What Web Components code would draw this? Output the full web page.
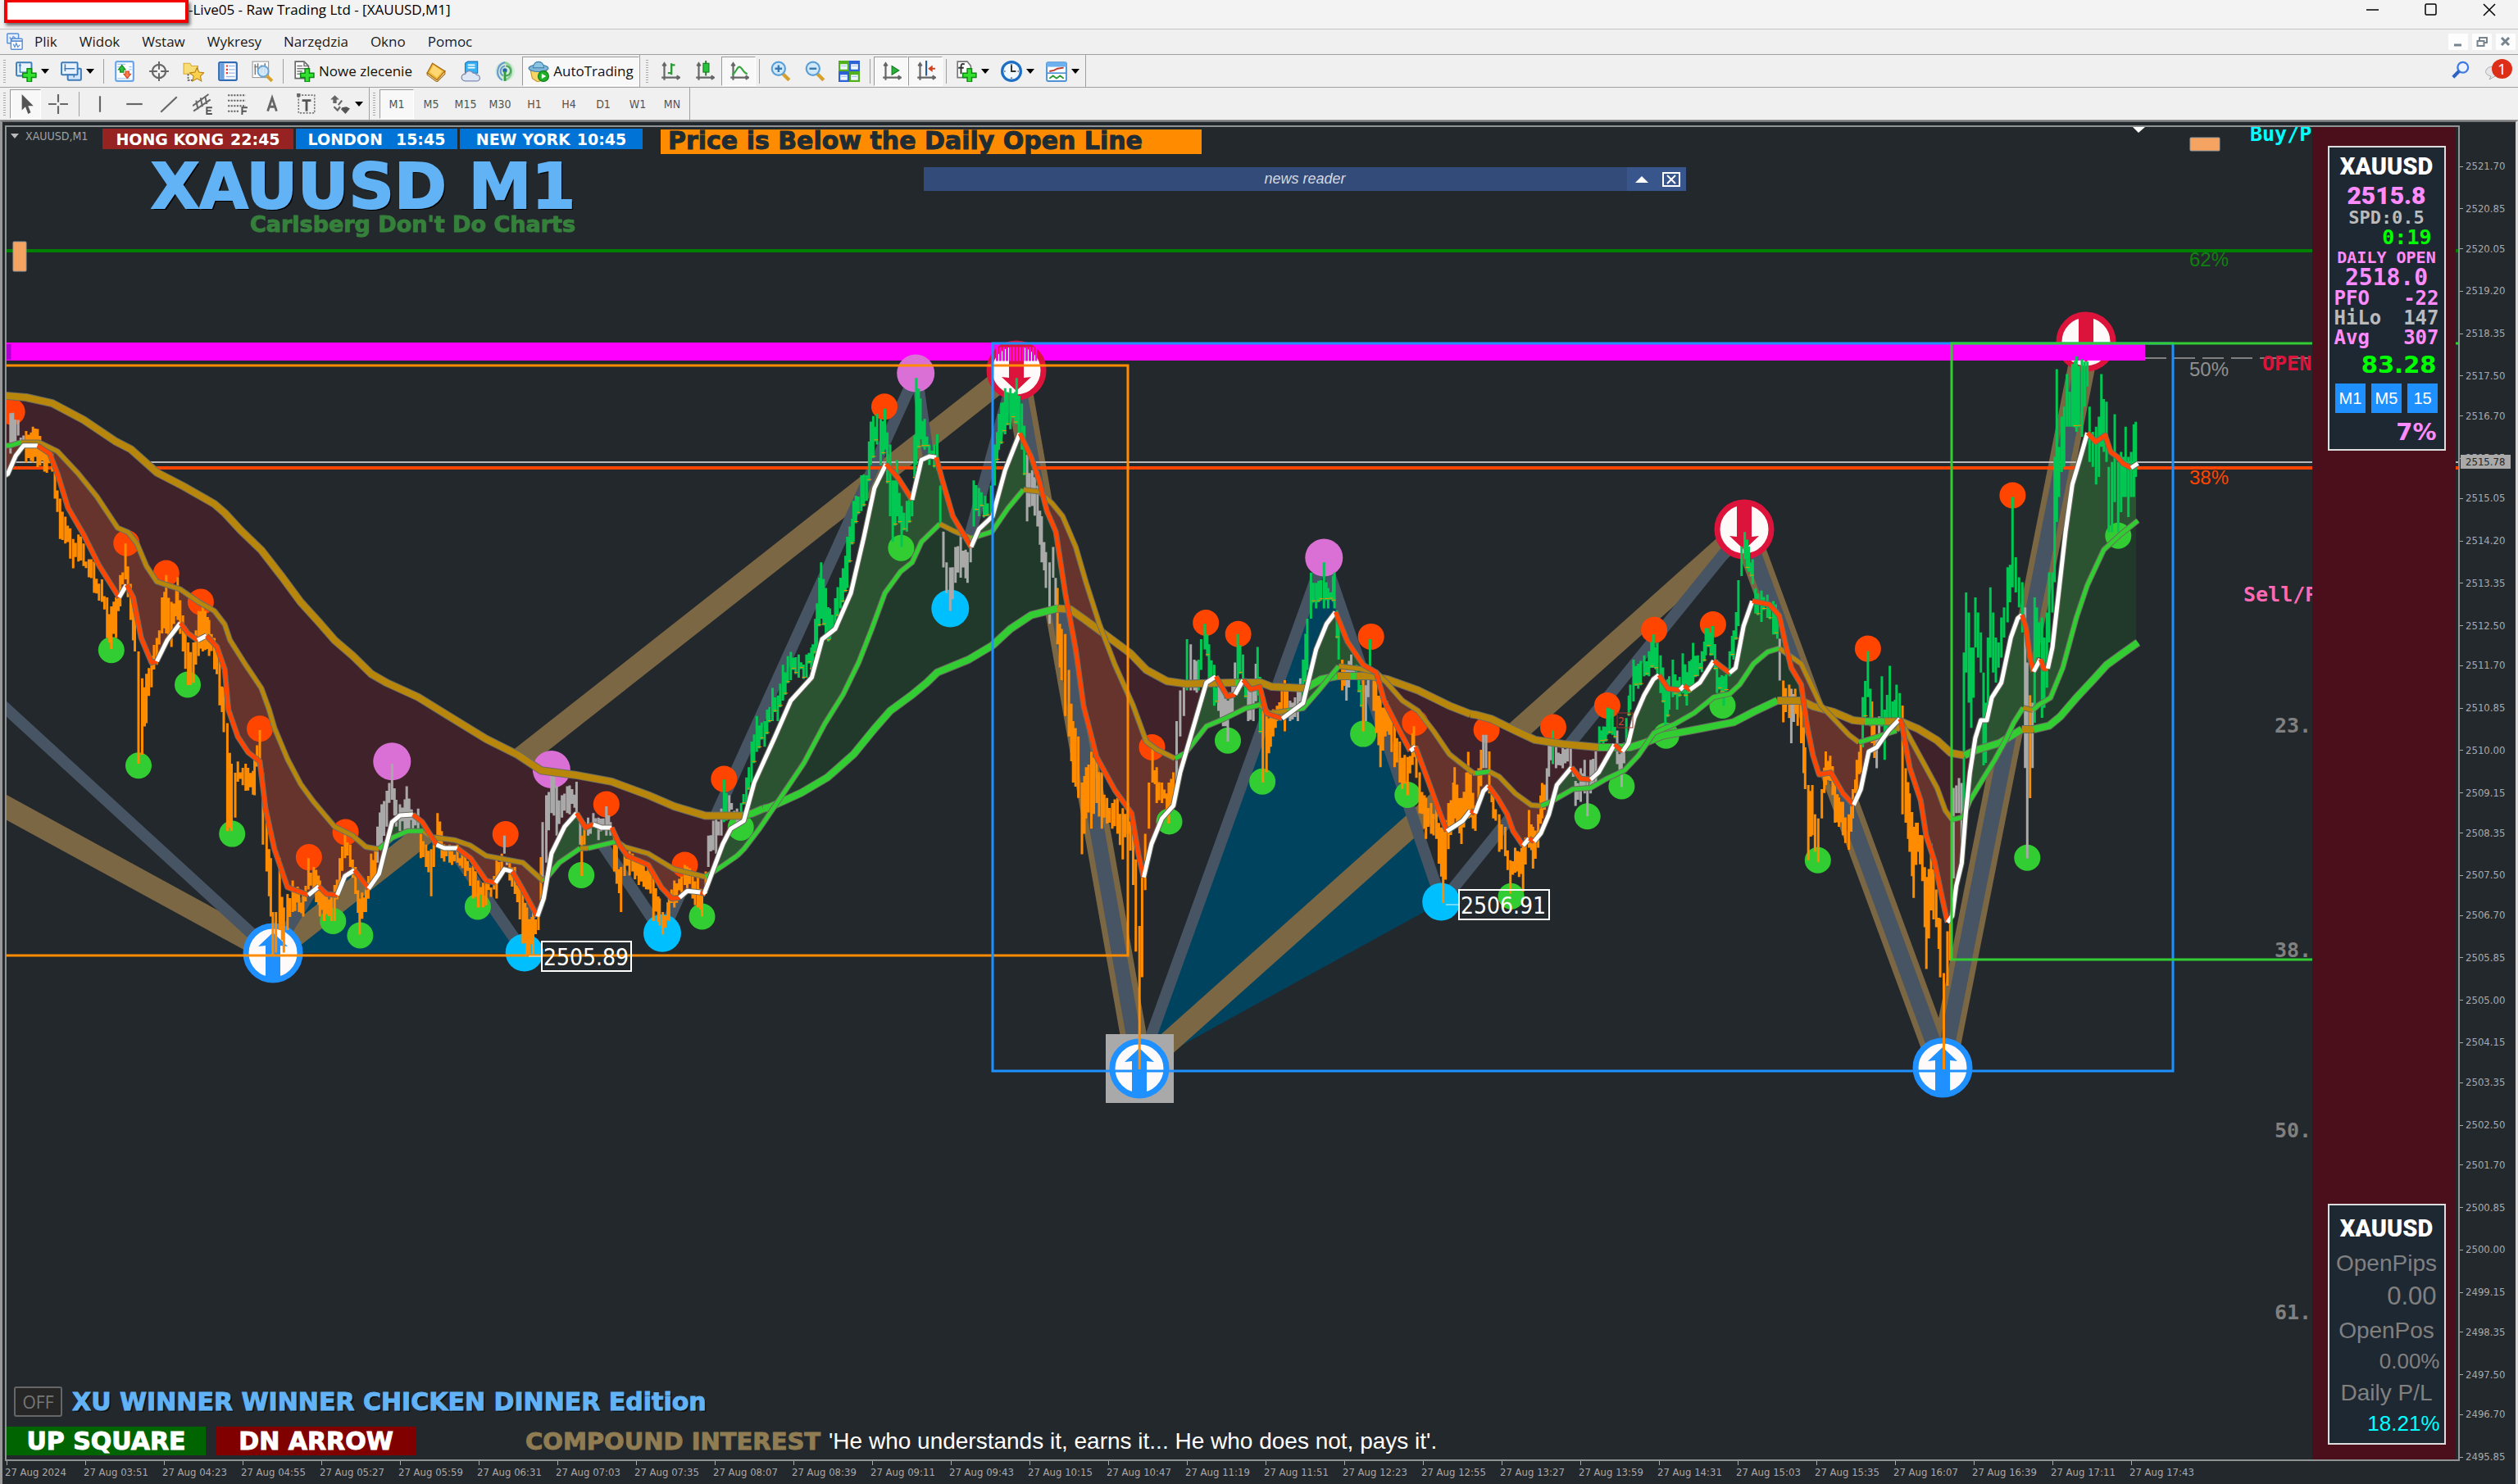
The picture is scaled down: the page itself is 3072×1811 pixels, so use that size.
<!DOCTYPE html>
<html lang="pl">
<head>
<meta charset="utf-8">
<title>Raw Trading Ltd - [XAUUSD,M1]</title>
<style>
  html, body { margin: 0; height: 100%; background: #f0f0f0; }
  body { font-family: "Open Sans", "Noto Sans", sans-serif; }
</style>
</head>
<body>
<trade-terminal></trade-terminal>

<script>
const HEAVY = '"DejaVu Sans", "Liberation Sans", sans-serif';
const UI = '"DejaVu Sans Condensed", "DejaVu Sans", sans-serif';

function define(name, css, html, setup) {
  customElements.define(name, class extends HTMLElement {
    connectedCallback() {
      if (this.shadowRoot) return;
      const root = this.attachShadow({ mode: 'open' });
      root.innerHTML = `<style>*{box-sizing:border-box}${css}</style>` +
        (typeof html === 'function' ? html(this) : html);
      if (setup) setup(this, root);
    }
  });
}

/* ---------- icons ---------- */
const plus = '<path d="M13 9h5v5h5v5h-5v5h-5v-5h-5v-5h5z" fill="#33e02e" stroke="#0b8a12" stroke-width="1.4"/>';
const axes = '<path d="M6 3v19M3 19h20M4 6l2-3 2 3M20 17l3 2-3 2" fill="none" stroke="#666" stroke-width="2"/>';
const ICONS = {
  app: '<rect x="2" y="1" width="15" height="13" rx="1" fill="#e4efff" stroke="#5a8fd6" stroke-width="1.6"/><rect x="7" y="8" width="15" height="14" rx="1" fill="#fff" stroke="#5a8fd6" stroke-width="1.6"/><path d="M7 11h15" stroke="#5a8fd6" stroke-width="2"/><path d="M10 15l2 4 2-5 2 5 3-3M5 6l3 3 2-4 3 2" fill="none" stroke="#5a8fd6" stroke-width="1.4"/>',
  newchart: '<rect x="1" y="2" width="17" height="15" rx="1" fill="#e8f3ff" stroke="#3f7cb8" stroke-width="1.8"/><path d="M5 4v9h10M4 6l1-2 1 2" fill="none" stroke="#3f7cb8" stroke-width="1.3"/>' + plus,
  profiles: '<rect x="8" y="9" width="15" height="13" rx="1" fill="#cfe4fa" stroke="#3f7cb8" stroke-width="1.8"/><rect x="1" y="2" width="18" height="14" rx="1" fill="#e8f3ff" stroke="#3f7cb8" stroke-width="1.8"/><path d="M5 4v8M4 9h12M5 16h10v3" fill="none" stroke="#3f7cb8" stroke-width="1.4"/>',
  market: '<rect x="2" y="1" width="20" height="22" rx="2" fill="#fff" stroke="#6aa5e8" stroke-width="2"/><path d="M4 4h9M4 7h4M4 20h14M17 7h3M17 10h3" stroke="#9cc3f2" stroke-width="1"/><path d="M9 5l4 5h-2v3H7v-3H5z" fill="#2fbf3a" stroke="#128a1c"/><path d="M15 20l-4-5h2v-3h4v3h2z" fill="#ff7a4a" stroke="#d4441c"/>',
  cross: '<circle cx="12" cy="12" r="7.5" fill="none" stroke="#666" stroke-width="2"/><path d="M12 1v9M12 14v9M1 12h9M14 12h9" stroke="#666" stroke-width="1.8"/>',
  star: '<path d="M1 3h7l2 3h7v9H1z" fill="#f7dd76" stroke="#d9a934"/><path d="M6 15v7h5" fill="none" stroke="#555" stroke-dasharray="2 1.4" stroke-width="1.5"/><path d="M16 8l2.300 5 5.700.7-4.200 3.800 1.200 5.500-5-2.800-5 2.800 1.200-5.500L8 13.700l5.700-.7z" fill="#fbd04c" stroke="#b98314"/>',
  navigator: '<rect x="2" y="2" width="20" height="20" rx="1.500" fill="#fff" stroke="#2f6cb4" stroke-width="2"/><path d="M3 3h5v18H3z" fill="#6b9fde"/><path d="M10 6h2M10 10h2M10 14h2" stroke="#e33" stroke-width="2"/><path d="M13 6h7M13 10h7M13 14h7M10 18h10" stroke="#9ab8e8" stroke-width="1.2"/>',
  tester: '<rect x="1" y="1" width="18" height="18" fill="#fff" stroke="#999"/><path d="M4 4v12M7 3v9M11 5v9M15 3v12M3 7h3M10 9h3" stroke="#777" stroke-width="1.4"/><circle cx="13" cy="12" r="6" fill="#cfe8fb" fill-opacity=".9" stroke="#68a4d6" stroke-width="1.800"/><path d="M17 17l6 6" stroke="#d5a12c" stroke-width="3.500"/>',
  order: '<path d="M2 1h10l5 5v14H2z" fill="#fff" stroke="#666" stroke-width="1.500"/><path d="M12 1v5h5M4 6h6M4 9h10M4 12h6M4 15h6" fill="none" stroke="#777" stroke-width="1.400"/>' + plus,
  book: '<path d="M8 3l14 9-9 10-11-8z" fill="#f0b93a" stroke="#a86d10" stroke-width="1.200"/><path d="M2 14l11 8 9-10v3l-9 9-11-8z" fill="#fff3cd" stroke="#a86d10"/><path d="M9 5l10 7-6 7-8-6z" fill="#ffd873"/>',
  cloud: '<path d="M6 3l3-2h11v13H6z" fill="#36b2f4" stroke="#1c74c4"/><path d="M9 5h8M9 8h8" stroke="#fff" stroke-width="1.700"/><path d="M6 23a4 4 0 0 1 0-8 5 5 0 0 1 9-1 4 4 0 0 1 4 2 3.500 3.500 0 0 1 0 7z" fill="#dfe6f4" stroke="#7d8cb4" stroke-width="1.200"/>',
  signal: '<circle cx="12" cy="12" r="11" fill="#d3ecd6"/><path d="M12 22A10.500 10.500 0 0 0 12 2" fill="none" stroke="#8fcf9a" stroke-width="2.500"/><path d="M9 22A11 11 0 0 1 12 2M10 17a6 6 0 0 1 2-11" fill="none" stroke="#6a9bd0" stroke-width="2"/><path d="M13 17a5.500 5.500 0 0 0 0-11" fill="none" stroke="#4aa45a" stroke-width="2"/><circle cx="12" cy="11" r="2.500" fill="#2166ac"/><path d="M12 12v11" stroke="#2fa13a" stroke-width="2.600"/>',
  auto: '<path d="M3 11h18l-3 10-7 3-6-4z" fill="#f6d563" stroke="#c1962a"/><ellipse cx="12" cy="8.500" rx="11" ry="4" fill="#7fb6d8" stroke="#3d7ea8"/><path d="M6 8c0-9 12-9 12 0z" fill="#8cc5e4" stroke="#3d7ea8"/><circle cx="17.500" cy="17.500" r="6" fill="#1fae2a" stroke="#0b7a16"/><path d="M15.500 14.500l5 3-5 3z" fill="#fff"/>',
  bars: axes + '<path d="M14 3v13M14 5h4M10 14h4" stroke="#2c9a34" stroke-width="2.200" fill="none"/>',
  candles: axes + '<path d="M14 0v17" stroke="#2c7a34" stroke-width="1.800"/><rect x="11" y="3" width="6.500" height="10" fill="#27c33a" stroke="#147a20"/>',
  line: axes + '<path d="M5 16c5-3 5-9 8-9s4 7 9 8" fill="none" stroke="#38a642" stroke-width="2"/>',
  zoomin: '<path d="M15 15l7 7" stroke="#d5a12c" stroke-width="4"/><circle cx="10" cy="9" r="7.500" fill="#cfe9fb" stroke="#5b9fd8" stroke-width="2"/><path d="M10 5v8M6 9h8" stroke="#3878b0" stroke-width="2.200"/>',
  zoomout: '<path d="M15 15l7 7" stroke="#d5a12c" stroke-width="4"/><circle cx="10" cy="9" r="7.500" fill="#cfe9fb" stroke="#5b9fd8" stroke-width="2"/><path d="M6 9h8" stroke="#3878b0" stroke-width="2.200"/>',
  tile: '<path d="M0 0h12v12H0zM12 12h12v12H12z" fill="#52b01c"/><path d="M12 0h12v12H12zM0 12h12v12H0z" fill="#2d62d6"/><path d="M2 4h8v6H2zM14 4h8v6h-8zM2 16h8v6H2zM14 16h8v6h-8z" fill="#eef6ff"/><path d="M3 6h6M15 6h6M3 18h6M15 18h6" stroke="#a9c3e8"/>',
  scroll: axes + '<path d="M13 6l8 5-8 5z" fill="#27b33a" stroke="#147a20"/>',
  shift: axes + '<path d="M13 0v17" stroke="#2b5f96" stroke-width="2"/><path d="M15 9l5-4v3h3v2h-3v3z" fill="#d1401c"/>',
  fx: '<path d="M2 1h11l4 5v13H2z" fill="#fff" stroke="#777" stroke-width="1.500"/><path d="M10 4c-3-1-4 0-4 3v8M3 8h6" fill="none" stroke="#333" stroke-width="1.800"/>' + plus,
  clock: '<circle cx="12" cy="12" r="10.500" fill="#f2f8ff" stroke="#1c6fc4" stroke-width="3"/><path d="M12 5v7h5" fill="none" stroke="#333" stroke-width="1.800"/><path d="M12 4v1M12 19v1M4 12h1M19 12h1" stroke="#555" stroke-width="2"/>',
  template: '<rect x="1" y="2" width="22" height="21" rx="1.500" fill="#fff" stroke="#4f93d6" stroke-width="1.800"/><path d="M1 2h22v5H1z" fill="#6db0ee"/><path d="M1 14h22" stroke="#4f93d6" stroke-width="1.500"/><path d="M4 12l5-1 4-2 7-1" fill="none" stroke="#c0392b" stroke-width="1.700"/><path d="M4 20l4-3 4 3 4-3 4 3" fill="none" stroke="#2c9a34" stroke-width="1.700"/>',
  cursor: '<path d="M8 1v18l4-4 3 8 3-1.500-3-7.500h6z" fill="#555"/>',
  plusline: '<path d="M12 1v9M12 14v9M1 12h9M14 12h9" stroke="#666" stroke-width="2"/>',
  vline: '<path d="M12 3v18" stroke="#666" stroke-width="2"/>',
  hline: '<path d="M3 12h18" stroke="#666" stroke-width="2"/>',
  diag: '<path d="M3 21L21 4" stroke="#666" stroke-width="2"/>',
  channel: '<path d="M0 14L18 1M1 20L20 7M4 8l2 10M9 5l2 10M14 3l2 9" stroke="#666" stroke-width="1.800"/><path d="M16 16h6M16 19.500h5M16 23h6M16 15v9" stroke="#555" stroke-width="1.800"/>',
  fibo: '<path d="M1 2h20M1 8h20M1 14h20M1 20h13" stroke="#666" stroke-width="1.800" stroke-dasharray="2 1.300"/><path d="M17 24v-8h6M17 20h5" fill="none" stroke="#555" stroke-width="1.800"/>',
  text: '<path d="M7 20L12 5l5 15M9 15h6" fill="none" stroke="#666" stroke-width="2.600"/>',
  label: '<rect x="3" y="2" width="18" height="20" fill="none" stroke="#777" stroke-width="1.500" stroke-dasharray="2 1.500"/><path d="M7 8h10M12 8v12" stroke="#555" stroke-width="2.600"/><path d="M1 0h4v4H1z" fill="#666"/>',
  shapes: '<path d="M1 7l5-5 5 5-3 0v4H4V7z" fill="#666"/><path d="M14 16l5-1 4 2-5 6-5-5z" fill="#555"/><path d="M5 15l4 4 3-4M10 13l4-5" fill="none" stroke="#666" stroke-width="2"/>',
  search: '<circle cx="15" cy="9" r="7" fill="#edf4ff" stroke="#3f7be0" stroke-width="2.500"/><path d="M10 14l-8 8" stroke="#2e62c4" stroke-width="4.500"/>'
};
const icon = (n, s = 26) => `<svg width="${s}" height="${s}" viewBox="0 0 24 24" aria-hidden="true">${ICONS[n]}</svg>`;

/* ---------- window chrome ---------- */
define('title-bar', `
  :host{display:flex;height:36px;background:#f3f3f3;border-bottom:1px solid #c4c4c4;font-size:17px;color:#000;align-items:flex-start}
  .field{flex:none;margin-left:5px;width:225px;height:28px;background:#fff;border:4px solid #f20000;border-top-width:3px;box-shadow:2px 3px 4px #666}
  h1{flex:1;font:inherit;margin:0;line-height:24px}
  button{width:71px;height:24px;padding:0;border:0;background:none;display:grid;place-items:center}
`, `<div class="field"></div><h1>-Live05 - Raw Trading Ltd - [XAUUSD,M1]</h1>
  <button aria-label="Minimalizuj"><svg width="16" height="16"><path d="M0 8h15" stroke="#000" stroke-width="1.500"/></svg></button>
  <button aria-label="Maksymalizuj"><svg width="16" height="16"><rect x="1" y="1" width="13" height="13" rx="1.500" fill="none" stroke="#000" stroke-width="1.500"/></svg></button>
  <button aria-label="Zamknij"><svg width="16" height="16"><path d="M1 1l14 14M15 1L1 15" stroke="#000" stroke-width="1.500"/></svg></button>`);

define('menu-bar', `
  :host{display:flex;height:31px;background:#f0f0f0;border-bottom:1px solid #a0a0a0;align-items:center;padding:0 3px 0 7px;font:17px "Open Sans",sans-serif}
  nav{display:flex;flex:1;gap:27px;margin-left:13px}
  a{color:#1a1a1a;text-decoration:none;line-height:26px}
  .mdi{display:flex;gap:5px}
  button{width:24px;height:20px;border:0;padding:0;background:#fdfdfd;display:grid;place-items:center}
`, `${icon('app', 22)}
  <nav>${['Plik', 'Widok', 'Wstaw', 'Wykresy', 'Narzędzia', 'Okno', 'Pomoc'].map(t => `<a href="#">${t}</a>`).join('')}</nav>
  <div class="mdi">
    <button aria-label="Minimalizuj wykres"><svg width="14" height="14"><path d="M2 11h9" stroke="#76848f" stroke-width="3"/></svg></button>
    <button aria-label="Przywróć wykres"><svg width="14" height="14"><path d="M4 5V2h9v6h-3M4 2h9" fill="none" stroke="#76848f" stroke-width="2"/><rect x="1.500" y="6" width="8" height="6" fill="none" stroke="#76848f" stroke-width="2"/></svg></button>
    <button aria-label="Zamknij wykres"><svg width="14" height="14"><path d="M2 2l9 9M11 2l-9 9" stroke="#76848f" stroke-width="3"/></svg></button>
  </div>`);

define('tool-button', `
  :host{display:block}
  button{display:flex;align-items:center;justify-content:center;gap:5px;width:100%;height:36px;border:1px solid transparent;background:none;padding:0;font:inherit;color:inherit;white-space:nowrap}
  :host([pressed]) button{background:#f8f8f8;border-color:#999 #fff #fff #999}
  .arrow{border:5px solid transparent;border-top:6px solid #000;border-bottom:0}
  svg{flex:none}
`, el => `<button aria-label="${el.getAttribute('icon') || el.textContent}">${el.hasAttribute('icon') ? icon(el.getAttribute('icon')) : ''}<slot></slot>${el.hasAttribute('menu') ? '<span class="arrow"></span>' : ''}</button>`);

const toolbarCss = `
  :host{display:flex;height:40px;background:#f0f0f0;border-bottom:1px solid #a0a0a0;padding-left:4px;align-items:center}
  .group{display:flex;align-items:center;height:39px;border-right:1px solid #a0a0a0}
  i{width:3px;height:28px;margin-right:5px;background:repeating-linear-gradient(#aaa 0 1px,#f0f0f0 1px 3px)}
  s{width:1px;height:30px;background:#a0a0a0;margin:0 4px}
  tool-button{width:42px}
  tool-button[menu]{width:55px}
`;
define('main-toolbar', toolbarCss + `
  :host{font:17px "Open Sans",sans-serif;color:#111}
  .order{width:161px} .auto{width:143px}
  .group+.group{padding-left:7px}
  .end{display:flex;margin-left:auto;align-items:center;gap:16px;padding-right:7px}
  .end button{border:0;background:none;padding:0;position:relative;height:30px}
  .chat{width:36px}
  .chat b{position:absolute;right:0;top:0;width:25px;height:24px;border-radius:50%;background:#dd2f18;color:#fff;font:19px/24px "Open Sans",sans-serif}
`, () => {
  const b = (n, extra = '') => `<tool-button icon="${n}" ${extra}></tool-button>`;
  return `<div class="group"><i></i>${b('newchart', 'menu')}${b('profiles', 'menu')}<s></s>
    ${['market', 'cross', 'star', 'navigator', 'tester'].map(n => b(n)).join('')}<s></s>
    <tool-button icon="order" class="order">Nowe zlecenie</tool-button>
    ${['book', 'cloud', 'signal'].map(n => b(n)).join('')}
    <tool-button icon="auto" class="auto" pressed>AutoTrading</tool-button></div>
  <div class="group"><i></i>${b('bars')}${b('candles')}${b('line', 'pressed')}<s></s>
    ${b('zoomin')}${b('zoomout')}${b('tile')}<s></s>${b('scroll', 'pressed')}${b('shift', 'pressed')}<s></s>
    ${b('fx', 'menu')}${b('clock', 'menu')}${b('template', 'menu')}</div>
  <div class="end"><button aria-label="Szukaj">${icon('search', 22)}</button>
    <button class="chat" aria-label="Powiadomienia"><svg width="36" height="30"><path d="M8 25l2-4c-10-2-8-12 4-12 14 0 14 12 1 12z" fill="#e6e6ea" stroke="#aaa"/></svg><b>1</b></button></div>`;
});
define('line-toolbar', toolbarCss + `:host{font:14px ${UI};color:#555} tool-button[icon=cursor]{width:38px}`, () =>
  `<div class="group"><i></i><tool-button icon="cursor" pressed></tool-button><tool-button icon="plusline"></tool-button><s></s>
   ${['vline', 'hline', 'diag', 'channel', 'fibo', 'text', 'label'].map(n => `<tool-button icon="${n}"></tool-button>`).join('')}
   <tool-button icon="shapes" menu></tool-button></div>
   <div class="group" style="padding-left:4px"><i></i>
   ${['M1', 'M5', 'M15', 'M30', 'H1', 'H4', 'D1', 'W1', 'MN'].map((t, n) => `<tool-button ${n ? '' : 'pressed'}>${t}</tool-button>`).join('')}</div>`);

/* ---------- chart data: each stretch is plotted on its own local scale ---------- */
const SCALES = [
  [0, 400, 1.568, 1.8233], [850, 380, 1.568, 1.6], [1800, 560, 2.063, 1.96], [2320, 380, 3, 1.6333]
];
const BARS = [
`a 20,190,280 35,205,240 45,240,262;o 50,230,300 63,220,300 72,225,310 85,270,320 100,280,320 105,320,380 115,380,470 125,420,480 140,470,535 150,460,520 160,480,530 170,515,555 180,520,590 195,560,610 205,600,690 213,620,715 222,600,690 230,550,620 240,480,560 250,570,650 258,620,720 265,720,970 272,780,950 280,770,880 290,730,800 300,690,750 310,600,680 318,550,680 328,610,710 340,555,650 350,640,720 360,700,795 370,700,790 380,630,730 388,620,720 400,650,730 410,690,760 420,730,840 428,800,900 435,880,1120 443,970,1120 450,990,1090 455,965,1010 470,970,1030 487,960,1040 497,895,960 503,990,1150 510,1090,1210 518,1180,1310 522,1300,1395 528,1300,1390 535,1180,1340 543,1290,1390 550,1260,1340 560,1230,1300 572,1250,1300 580,1260,1310 590,1180,1250 600,1200,1250 612,1230,1310 620,1250,1320 640,1240,1320 650,1180,1240 660,1120,1180 670,1150,1200 680,1200,1260 688,1270,1350 700,1240,1300 710,1170,1240 718,1160,1230;a 722,1110,1190 730,1060,1150 740,1030,1110 750,970,1050 758,1050,1110 765,1060,1120 778,1020,1120 790,1080,1120 800,1070,1120;o 805,1120,1180 815,1150,1200 825,1160,1265 830,1130,1200 837,1080,1150 845,1120,1180 860,1150,1190 875,1150,1190 890,1170,1220 905,1190,1270 915,1230,1290 930,1230,1285 945,1220,1250 950,1180,1270 960,1170,1220;a 965,1130,1170;o 975,1190,1230 985,1200,1260 1000,1250,1370 1008,1290,1395 1020,1300,1395 1030,1290,1340;a 1038,1100,1230 1045,1040,1190 1055,985,1080 1065,1020,1130 1075,1040,1090 1085,1020,1080 1103,1010,1080 1110,1100,1150;o 1113,1130,1220 1118,1100,1150;a 1125,1090,1130 1135,1080,1110 1145,1090,1140 1160,1065,1130 1168,1100,1130;o 1175,1120,1210 1188,1200,1300 1195,1150,1220 1210,1170,1210 1222,1180,1240 1240,1190,1250 1250,1220,1320 1262,1270,1330 1268,1300,1350 1280,1260,1320 1290,1230,1290 1310,1195,1240 1325,1210,1270 1335,1220,1290 1343,1250,1310 1350,1210,1260;a 1355,1130,1200 1370,1080,1170 1380,1070,1130;g 1385,1005,1100;a 1395,1040,1090 1410,1070,1100`,
`g 85,960,1000 95,910,970 105,840,920 115,790,860 130,800,850 145,735,800 155,750,800 165,690,760 180,665,720 195,670,715 210,670,715 222,650,700 230,570,680 238,490,600 247,540,640 255,580,640 265,560,620 275,520,580 288,440,540 300,370,450 315,320,390 325,320,370 333,215,300 345,200,260 352,210,300 360,190,270 370,260,400 375,330,450 383,290,400 392,380,460 402,370,430 412,350,400 420,130,300 428,170,250 436,210,270 445,260,300 460,240,310 466,340,420;a 472,430,500 478,490,550 485,500,585 495,460,530 505,440,520 518,470,530 524,440,490;g 530,330,420 540,345,400 552,360,400 563,340,395 570,260,340 578,200,270 590,150,240 600,150,230 612,130,220 622,180,270;a 632,280,410 642,310,380 652,340,420 660,400,490 668,470,540 675,490,610 682,460,520;o 690,540,650 698,620,720 705,630,790 712,700,830 720,800,920 730,830,950 737,920,1060 745,890,990 755,860,1010 765,870,960 775,900,1010 785,950,1000 795,960,1010 805,950,1020 815,970,1070 825,960,1020 835,1000,1120 840,1070,1250 847,1200,1480 852,1100,1300 858,1020,1130 865,920,1010 872,850,920 880,890,960 890,920,960 903,920,1000 912,900,960;a 918,800,920 925,740,830 932,720,790;g 938,640,740;a 945,650,740 952,680,740;g 960,680,740 965,640,700 972,610,660 980,650,720 990,690,770;a 998,730,780 1007,740,810 1016,760,840 1025,720,790;g 1035,630,720 1045,670,730;a 1055,720,800 1065,720,800;g 1073,655,750;o 1083,770,920 1090,790,900 1098,780,850 1110,770,800 1125,720,820;a 1135,760,800 1150,740,800;g 1160,680,760 1168,600,700 1175,510,600 1185,530,580 1200,490,580 1208,540,580 1220,510,580 1228,600,680;o 1235,680,740;a 1243,700,760 1252,670,720;g 1262,690,710;o 1275,720,820;a 1280,730,800;g 1288,640,720;o 1295,700,780 1308,750,890 1320,760,820 1335,800,890 1345,840,920 1360,870,945 1372,810,870 1383,900,980 1395,950,1030 1405,960,1020 1415,960,1030 1428,1010,1155 1438,960,1050 1450,890,990 1463,950,1040 1476,860,990 1485,940,1010`,
`o 0,830,890 8,740,830;a 20,660,740 27,660,740;o 35,700,800 45,790,860 60,850,940 75,880,950 88,960,1040 100,930,990 110,940,1000 120,920,1035 135,840,930 145,880,980 158,850,930 168,775,860;a 180,740,820 185,670,760;g 195,650,730;a 203,670,740 220,690,740 240,690,740 252,770,830 265,740,820 275,720,800 282,760,855 290,720,800 303,700,780;g 312,640,700 322,640,690 332,595,660 345,600,660;a 357,650,730 368,700,785;g 380,620,690 390,540,600 398,480,580 410,490,550 425,470,520 437,460,520 448,420,500 458,440,520 466,470,560 478,530,640 488,520,600 497,480,570 508,530,600 522,465,560 532,510,590 548,440,540 560,470,520 570,460,510 580,405,470 597,400,470 608,480,560 625,520,590 640,460,520 650,410,480 662,290,400 670,210,280 678,175,240 688,210,270 698,240,300 705,310,370 720,315,390 735,325,380 750,340,420 760,360,430;a 766,430,530;o 775,530,630 790,540,620;a 795,550,680;o 805,550,610 820,560,680 830,690,790 838,780,960 848,780,900 855,850,940 863,860,965 872,790,860 882,700,780 893,710,770 905,760,870 915,810,880 925,820,900 940,850,935 950,790,860 960,720,800 970,680,750;g 975,570,690 988,460,570;o 998,580,680;a 1010,660,740;g 1023,520,640 1030,600,720 1043,495,640 1050,580,650 1060,540,620 1068,560,650;o 1075,590,850 1083,740,870 1093,800,940 1103,880,1050 1113,870,940 1125,900,1010 1135,1000,1220 1147,920,1080 1160,1030,1120 1170,1100,1240 1179,1230,1460 1188,1130,1260 1195,1100,1200`,
`a 190,950,1130 200,945,1000 210,930,1000 220,940,1060;g 228,680,1000 236,560,720 246,600,780 255,670,830 263,670,770 270,570,670 280,600,690 290,640,720 300,720,905 308,780,900 316,650,800 325,550,690 335,600,720 345,650,740 355,660,710 365,610,690 375,590,650 388,510,620 397,505,580 406,370,550 418,490,560 430,530,590 442,540,640;a 452,590,910 460,700,1090;o 470,765,970;a 479,780,910;g 487,570,820 495,590,690 503,620,690 514,610,810 522,650,790 532,600,750 540,520,660 552,520,600 560,290,540 568,115,420 576,270,370 586,210,320 595,190,310 605,125,230 615,160,230 625,105,230 640,90,240 660,95,250 670,100,190 680,100,150 688,190,300 700,240,310 712,230,345 722,210,330 731,125,270 740,175,280 750,180,300 758,310,440 770,300,440 780,205,380 793,300,440 803,280,400 812,290,370 820,230,370 830,290,410 840,280,370 850,225,370 857,220,330`];
const SLOW = [
`d 0,150 50,155 100,168 160,205 220,252 250,270 300,322 350,352 410,392 430,412 460,450 500,495 540,555 575,610 610,655 640,695 675,730 710,770 740,790 800,822 860,865 930,915 990,950 1035,985 1100,995 1170,1010 1240,1040 1290,1065 1350,1086 1420,1086;l 1440,1080 1460,1070`,
`l 140,968 200,940 250,910 300,865 340,815 370,780 410,750 440,725 460,705 520,680 566,652 600,620 640,593 690,580;d 715,582 740,600 780,630 830,668 860,700 900,722 935,727 1030,725;l 1040,725;d 1080,725 1100,733 1165,736;l 1195,718 1225,712;d 1250,712;l 1262,712;d 1290,712 1320,718 1380,740 1440,770 1480,786`,
`d 0,612 40,622 100,650 150,672 220,682 310,690;l 390,690 430,678 470,662 540,650 650,630 700,605 760,578;d 820,578 850,592 900,605 950,625 980,628;l 1030,628;d 1060,628`,
`d 0,818 60,832 130,855 180,880 230,885;l 270,875 360,860 440,833;d 483,833;l 540,826 580,808 640,770 700,735 750,705 800,685 865,660`];
const MID = [
`l 0,262 20,262 40,255;d 75,255 110,275 150,325 185,375 205,410 225,445 245,455 262,480 280,530 300,565 345,582 380,610 410,630 430,660 440,695 470,750 500,802 515,850 525,890 550,960 575,1015 600,1055 640,1110 675,1130 700,1155 725,1160;l 750,1135 780,1120 810,1120;d 825,1133 870,1140 900,1152 930,1175 1000,1190 1040,1232;l 1070,1190 1110,1158;d 1125,1158;l 1180,1143;d 1195,1155 1240,1170 1290,1205 1350,1222;l 1385,1195 1410,1175`,
`l 90,1050 120,1010 160,950 205,882 245,805 280,748 310,685 335,620 360,550 390,508 412,490 430,450 465,415;d 490,428 525,443;l 565,430 595,385 625,348;d 655,352 680,375 700,400 725,460 745,530 770,610 800,690 835,770 860,840 880,855 915,873;l 935,862 975,810 1010,795 1050,775 1078,768;d 1095,785 1130,780;l 1160,775 1190,740 1228,693;d 1270,698 1300,705 1320,725 1350,760 1380,780 1410,820 1440,865 1485,901`,
`d 0,752;l 35,748;d 60,760 100,800 140,828 165,830;l 190,820 245,790 290,787 330,765 375,745 410,710 450,655 500,635 550,608 600,570 640,562 665,540 700,490 735,462 765,453;d 790,470 820,490 845,540 870,590 905,625 940,660 965,678;l 1000,668 1060,650`,
`d 0,820 40,860 80,900 130,950 160,995 185,1013;l 225,1008 250,975 300,930 340,895 380,855 410,820 445,790;d 480,795;l 500,785 545,770 590,710 640,610 680,545 740,475 800,445 865,417`];
const FAST = [
`w 8,330 15,325 30,285 45,262 72,262;r 95,280 110,325 130,400 160,460 190,530 228,600;w 242,572;r 255,600 270,690 290,745 300,742;w 320,695 345,657;r 360,680 378,695;w 395,685;r 415,710 430,760 437,850 455,910 475,945 497,965 508,1070 525,1160 550,1245 590,1262;w 610,1243;r 625,1260 645,1262;w 660,1220 678,1207;r 705,1248;w 725,1215 750,1100 765,1085 790,1083;r 808,1100 835,1150;w 850,1158 875,1158;r 900,1180 930,1230 948,1235;w 965,1205 980,1210;r 1000,1250 1028,1310;w 1040,1270 1055,1170 1080,1110 1103,1080;r 1120,1112 1135,1105;w 1150,1112 1170,1112;r 1185,1150 1200,1175 1240,1195 1265,1245 1285,1270 1300,1268;w 1315,1253 1340,1256;r 1350,1260`,
`w 15,1135 50,1040 65,1010 90,995 110,920 150,830 180,760 220,715 240,640 265,620 295,550 320,440 340,345 362,298;r 385,325 412,368;w 430,290 445,283 458,285;r 470,330 490,400 525,460;w 540,425 566,400 590,310 618,238;r 640,285 655,330 670,390 687,430 705,550 725,660 740,770 765,870 800,935 832,980 845,1060 855,1105;w 870,1040 890,990 912,965 925,900 945,830 975,725 993,713;r 1015,752 1030,748;w 1045,720;r 1060,738 1077,733 1090,785 1120,795;w 1160,765 1185,660 1205,610 1222,587;r 1245,645 1275,690 1300,705 1315,760 1345,820 1365,858;w 1375,850;r 1395,905 1420,975 1435,1015;w 1465,995 1480,975;r 1489,980`,
`w 20,795 33,782;r 55,810 80,850 95,890 120,925;w 135,908;r 148,915;w 165,895 185,850 205,780 242,738;r 265,765 290,767;w 310,750 350,683;r 370,700;w 385,680 400,620 425,565 448,527 462,517;r 485,550 515,553;w 525,543;r 540,552;w 565,535 600,483;r 640,512;w 655,500 675,400 697,340;r 740,348 765,375 780,440 795,500 820,540 835,640 850,710 865,755 895,750 925,800 952,828;w 970,790 990,700 1010,690 1040,650 1068,622`,
`r 0,820 30,910 70,975 90,1045 120,1095 145,1160 168,1218;w 185,1205 200,1145 220,1100 235,1000 250,920 270,850 290,815 312,815 330,770 365,740 400,650 425,612 440,605;r 455,630 470,690 483,718;w 508,693;r 520,712 535,712;w 552,670 575,560 600,440 625,345 655,290 680,242;r 710,260 745,247 765,280 790,290 810,303 840,312;w 865,303`];
const DOTS = {
  r: [['23,187 242,479 318,546 384,610 497,892 591,1178 661,1122 967,1127 1160,1060 1310,1195 1385,1004'], ['359,186 974,608 1036,630 1290,635 871,851 1374,803 1511,817'], ['196,642 332,590 450,409 598,396 988,454 1352,87'], ['']],
  l: [['213,717 265,974 359,794 444,1126 637,1320 689,1352 914,1288 1112,1218 1343,1310 1417,1112'], ['391,462 904,996 1016,838 1082,918 1275,825 1360,944'], ['90,1046 282,855 368,783 480,662 622,590 862,960 1389,954'], ['793,447']],
  v: [['750,965 1055,983'], ['419,121 1200,481'], [''], ['']],
  c: [['1003,1390 1267,1347'], ['485,580 1424,1153'], [''], ['']]
};
const COLORS = { a: '#a9a9a9', o: '#ff8c00', g: '#00c853', d: '#b8860b', l: '#32cd32', w: '#ffffff', r: '#ff4500', v: '#da70d6', c: '#00bfff' };

const place = (k, x, y) => [SCALES[k][0] + x / SCALES[k][2], SCALES[k][1] + y / SCALES[k][3]];
const parse = src => src.flatMap((s, k) => s.split(';').map(run => {
  const [c, ...pts] = run.trim().split(' ');
  return { c, pts: pts.map(p => {
    const n = p.split(',').map(Number), q = place(k, n[0], n[1]);
    if (n.length > 2) q.push(place(k, n[0], n[2])[1]);
    return q;
  }) };
}));
const f = n => Math.round(n * 10) / 10;

function averageLine(runs, width) {
  let prev = null, edge = '', body = '';
  for (const run of runs) {
    const pts = prev ? [prev, ...run.pts] : run.pts;
    const s = pts.map(p => f(p[0]) + ',' + f(p[1])).join(' ');
    edge += `<polyline points="${s}" stroke="#6c6c60" stroke-width="${width + 2}"/>`;
    body += `<polyline points="${s}" stroke="${COLORS[run.c]}" stroke-width="${width}"/>`;
    prev = run.pts[run.pts.length - 1];
  }
  return `<g fill="none" stroke-linejoin="round">${edge}${body}</g>`;
}
function sampler(runs) {
  const pts = runs.flatMap(r => r.pts); let i = 0;
  return x => {
    while (i < pts.length - 2 && pts[i + 1][0] < x) i++;
    const [a, b] = [pts[i], pts[i + 1]];
    return a[1] + (b[1] - a[1]) * Math.max(0, Math.min(1, (x - a[0]) / (b[0] - a[0])));
  };
}
function bands(slow, mid, fast) {
  const S = sampler(slow), M = sampler(mid), F = sampler(fast);
  const outer = {}, inner = {};
  for (let x = 9; x < 2607; x += 3) {
    const s = S(x), m = M(x), q = F(x);
    const oc = m > s ? '#40222a' : '#21392b', ic = q > m ? '#67342d' : '#2c5331';
    outer[oc] = (outer[oc] || '') + `M${x} ${f(s)}V${f(m)}`;
    inner[ic] = (inner[ic] || '') + `M${x} ${f(m)}V${f(q)}`;
  }
  const draw = o => Object.entries(o).map(([c, d]) => `<path d="${d}" stroke="${c}" stroke-width="3" shape-rendering="crispEdges"/>`).join('');
  return draw(outer) + draw(inner);
}
function priceBars(runs) {
  let seed = 11; const rnd = () => (seed = (seed * 16807) % 2147483647) / 2147483647;
  const d = { a: '', o: '', g: '' }; let ticks = '';
  runs.forEach((run, r) => run.pts.forEach((p, n) => {
    d[run.c] += `M${f(p[0])} ${f(p[1])}V${f(p[2])}`;
    let q = run.pts[n + 1];
    if (!q && runs[r + 1]) { q = runs[r + 1].pts[0]; }
    if (!q || q[0] - p[0] > 30) return;
    for (let x = p[0] + 3; x < q[0] - 1.5; x += 3) {
      const t = (x - p[0]) / (q[0] - p[0]);
      let hi = p[1] + (q[1] - p[1]) * t + rnd() * 18 - 3, lo = p[2] + (q[2] - p[2]) * t - rnd() * 18 + 3;
      if (lo < hi + 8) lo = hi + 8;
      d[run.c] += `M${f(x)} ${f(hi)}V${f(lo)}`;
      if (run.c === 'g') ticks += `M${f(x - 2)} ${f(lo - 2)}h5`;
    }
  }));
  return Object.entries(d).map(([c, s]) => `<path d="${s}" stroke="${COLORS[c]}" stroke-width="3"/>`).join('') +
    `<path d="${ticks}" stroke="#ff8c00" stroke-width="1"/>`;
}
function dots() {
  return Object.entries(DOTS).map(([c, groups]) => groups.map(([s], k) => s ? s.split(' ').map(p => {
    const [x, y] = place(k, ...p.split(',').map(Number));
    return `<circle cx="${f(x)}" cy="${f(y)}" r="${c === 'v' || c === 'c' ? 23 : 16}" fill="${COLORS[c]}"/>`;
  }).join('') : '').join('')).join('');
}
const up = (x, y) => `<g transform="translate(${x} ${y})"><circle r="33" fill="#fffafa" stroke="#1e90ff" stroke-width="7"/><path d="M0-25L18-8 9-9V31H-9V-9l-9 1z" fill="#1e90ff"/></g>`;
const down = (x, y) => `<g transform="translate(${x} ${y})"><circle r="33" fill="#fffafa" stroke="#dc143c" stroke-width="7"/><path d="M0 25L18 8 9 9V-31H-9V9l-9-1z" fill="#dc143c"/></g>`;

function drawChart() {
  const slow = parse(SLOW), mid = parse(MID), fast = parse(FAST);
  return `<svg viewBox="8 155 2992 1626" preserveAspectRatio="xMinYMin slice" role="img" aria-label="XAUUSD M1">
  <g fill="#00435f"><path d="M333 1163L478 929L640 1163z"/><path d="M1390 1304L1615 680L1759 1101z"/></g>
  <g fill="none" stroke="#7c6744" stroke-linejoin="round">
    <path d="M0 981L333 1163L1239 450" stroke-width="27"/><path d="M1239 450L1390 1304" stroke-width="32"/>
    <path d="M1390 1304L2128 645" stroke-width="27"/><path d="M2128 645L2370 1303L2546 415" stroke-width="33"/></g>
  <g fill="none" stroke="#465463" stroke-linejoin="round">
    <path d="M0 858L333 1163L478 929L640 1163L673 938L808 1139L1118 455L1159 742L1239 450" stroke-width="14"/>
    <path d="M1239 450L1390 1304" stroke-width="18"/>
    <path d="M1390 1304L1615 680L1759 1101L2128 645" stroke-width="14"/>
    <path d="M2128 645L2370 1303L2546 415" stroke-width="19"/></g>
  <path d="M8 306H3000" stroke="#008000" stroke-width="4"/>
  <path d="M8 564H3000" stroke="#b8b8b8" stroke-width="2"/>
  <path d="M8 571H3000" stroke="#ff4500" stroke-width="4"/>
  ${bands(slow, mid, fast)}
  <rect x="1349" y="1262" width="83" height="84" fill="#a9a9a9"/>
  ${up(333, 1163)}${up(1390, 1304)}${up(2370, 1303)}${down(2128, 646)}${down(2545, 417)}
  <path d="M8 429H2617" stroke="#ff00ff" stroke-width="22"/>
  <path d="M10 420V439" stroke="#b000d0" stroke-width="7"/>
  ${dots()}${down(1240, 452)}
  <path d="M1215 432H1265M2520 431H2570" stroke="#ff00ff" stroke-width="17" stroke-dasharray="3 1"/>
  <path d="M2617 437H2822" stroke="#808080" stroke-width="2" stroke-dasharray="26 9"/>
  ${priceBars(parse(BARS))}
  ${averageLine(slow, 8)}${averageLine(mid, 5)}${averageLine(fast, 5)}
  <path d="M8 446H1376V1166H8" fill="none" stroke="#ff8c00" stroke-width="3"/>
  <path d="M1211 419H2651V1307H1211z" fill="none" stroke="#1e90ff" stroke-width="3"/>
  <path d="M3000 419H2381V1171H2822" fill="none" stroke="#32cd32" stroke-width="3"/>
  <path d="M645 1167h15M1764 1104h15" stroke="#eee" stroke-width="1"/>
  <g fill="none" stroke="#fff" stroke-width="2"><rect x="661" y="1149" width="109" height="36"/><rect x="1780" y="1086" width="110" height="36"/></g>
  <rect x="1973" y="870" width="19" height="18" fill="none" stroke="#a03424"/>
  <g font-family='${UI}'>
    <text x="663" y="1178" font-size="28" fill="#fff">2505.89</text><text x="1782" y="1115" font-size="28" fill="#fff">2506.91</text>
    <text x="1974" y="885" font-size="14" fill="#c8442c">2</text></g>
  <g font-family="Liberation Sans" font-size="24">
    <text x="2671" y="325" fill="#108010">62%</text><text x="2671" y="459" fill="#909090">50%</text><text x="2671" y="591" fill="#ff4500">38%</text></g>
  <g font-family="DejaVu Sans Mono" font-weight="bold" font-size="25" fill="#808080">
    <text x="2745" y="172" fill="#00ffff">Buy/P</text><text x="2760" y="452" fill="#dc143c">OPEN</text>
    <text x="2737" y="734" fill="#ff69b4">Sell/P</text>
    <text x="2775" y="894">23.</text><text x="2775" y="1168">38.</text><text x="2775" y="1388">50.</text><text x="2775" y="1610">61.</text></g>
  <rect x="16" y="295" width="16" height="36" rx="1" fill="#f4a460" stroke="#9a9a9a"/>
  <rect x="2672" y="168" width="36" height="16" rx="1" fill="#f4a460" stroke="#9a9a9a"/>
  <path d="M2602 155h15l-8 7z" fill="#fff"/>
  </svg>`;
}

/* ---------- chart parts ---------- */
define('city-clock', `
  :host{display:flex;height:25px;align-items:center;justify-content:center;gap:8px;padding:0 12px;background:#0074d6;color:#fff;font:bold 19px ${HEAVY};white-space:nowrap}
  :host([closed]){background:#962222}
`, `<slot></slot><slot name="time"></slot>`);

define('news-reader', `
  :host{display:flex;width:930px;height:29px;background:#334b78;align-items:center;color:#d4d8e0;font:italic 18px "Liberation Sans",sans-serif}
  span{flex:1;text-align:center;padding-left:72px}
  button{width:36px;height:29px;padding:0;border:0;background:#38568c;display:grid;place-items:center}
`, `<span>news reader</span>
  <button aria-label="Zwiń"><svg width="16" height="10"><path d="M0 9L8 1l8 8z" fill="#fff"/></svg></button>
  <button aria-label="Zamknij"><svg width="22" height="18"><rect x="1" y="1" width="20" height="16" fill="none" stroke="#fff" stroke-width="2"/><path d="M6 4l10 10M16 4L6 14" stroke="#fff" stroke-width="2"/></svg></button>`);

define('symbol-panel', `
  :host{display:flex;flex-direction:column;width:144px;background:#1e2832;border:2px solid #ddd;color:#ff8cff;font-family:"DejaVu Sans Mono",monospace;font-weight:bold}
  div{display:flex;align-items:center;justify-content:center;white-space:nowrap}
  .sym{font:900 29px Roboto,"Liberation Sans",sans-serif;color:#fff;height:36px}
  .price{font:900 30px Roboto,"Liberation Sans",sans-serif;height:34px}
  .spd{font-size:22px;height:20px;color:#bbb}
  .left{font-size:25px;height:28px;color:#0f0;justify-content:flex-end;padding-right:15px}
  .cap{font-size:20px;height:21px}
  .open{font-size:28px;height:28px}
  .row{font-size:24px;height:24px;justify-content:space-between;padding:0 6px}
  .big{font:bold 29px "DejaVu Sans",sans-serif;height:42px;justify-content:flex-end;padding-right:9px}
  .btns{gap:7px;height:40px}
  button{width:37px;height:36px;border:0;padding:0;background:#1e90ff;color:#fff;font:20px "Liberation Sans",sans-serif}
`, `<div class="sym" style="margin-top:5px">XAUUSD</div><div class="price">2515.8</div><div class="spd">SPD:0.5</div>
  <div class="left">0:19</div><div class="cap">DAILY OPEN</div><div class="open">2518.0</div>
  <div class="row"><span>PFO</span><span>-22</span></div>
  <div class="row" style="color:#bbb"><span>HiLo</span><span>147</span></div>
  <div class="row"><span>Avg</span><span>307</span></div>
  <div class="big" style="color:#0f0">83.28</div>
  <div class="btns"><button>M1</button><button>M5</button><button>15</button></div>
  <div class="big">7%</div>`);

define('position-panel', `
  :host{display:flex;flex-direction:column;width:144px;height:294px;background:#1e2832;border:2px solid #ddd;color:#808080;font:28px "Liberation Sans",sans-serif;padding:6px 5px 0}
  div{display:flex;align-items:center;justify-content:center;white-space:nowrap}
  .sym{font:900 29px Roboto,"Liberation Sans",sans-serif;color:#fff;height:43px}
  .cap{height:42px;padding-top:2px} .val{height:34px;justify-content:flex-end}
  .num{font-size:31px;height:40px;justify-content:flex-end;padding-right:4px}
  .val{font-size:26px}
`, `<div class="sym">XAUUSD</div><div class="cap">OpenPips</div><div class="num">0.00</div>
  <div class="cap">OpenPos</div><div class="val">0.00%</div><div class="cap">Daily P/L</div><div class="val" style="color:#0ff">18.21%</div>`);

const PRICES = ['2521.70', '2520.85', '2520.05', '2519.20', '2518.35', '2517.50', '2516.70', '2515.85', '2515.05', '2514.20', '2513.35', '2512.50', '2511.70', '2510.85', '2510.00', '2509.15', '2508.35', '2507.50', '2506.70', '2505.85', '2505.00', '2504.15', '2503.35', '2502.50', '2501.70', '2500.85', '2500.00', '2499.15', '2498.35', '2497.50', '2496.70', '2495.85'];
define('price-axis', `
  :host{display:flex;flex-direction:column;position:relative;padding:50px 0 5px;color:#a9a9a9;font:13px/14px ${UI}}
  .tick{flex-basis:0;min-height:0}
  .tick:last-of-type{height:0;flex:none}
  .tick span{display:flex;height:14px;margin-top:-7px;align-items:center;gap:3px}
  .tick span::before{content:"";width:4px;height:1px;background:#a9a9a9}
  output{position:absolute;left:1px;top:402px;width:61px;height:17px;line-height:17px;background:#a9a9a9;color:#23282c;padding-left:6px}
`, () => PRICES.map((p, n) => `<div class="tick" style="flex-grow:${n < PRICES.length - 1 ? Math.round((p - PRICES[n + 1]) * 100) : 0}"><span>${p}</span></div>`).join('') + '<output>2515.78</output>');

define('time-axis', `
  :host{display:flex;color:#a9a9a9;font:13px/18px ${UI}}
  span{flex:0 0 96px;white-space:nowrap}
  span::before{content:"";display:block;width:1px;height:5px;margin-left:2px;background:#a9a9a9}
`, () => {
  let out = '<span>27 Aug 2024</span>';
  for (let t = 231; t <= 1063; t += 32)
    out += `<span>27 Aug ${String(Math.floor(t / 60)).padStart(2, '0')}:${String(t % 60).padStart(2, '0')}</span>`;
  return out;
});

define('price-chart', `
  :host{display:grid;grid-template-columns:1fr 68px;grid-template-rows:1fr 28px;background:#23282c;border-top:2px solid #777;border-left:3px solid #999;border-right:3px solid #d8d8d8;padding:4px 0 0 3px;font-family:${HEAVY}}
  .plot{display:grid;grid-template-columns:1fr 175px 3px;position:relative;border:2px solid #8f9394;overflow:hidden;min-height:0}
  .plot>svg{position:absolute;inset:0;width:100%;height:100%}
  .hud{position:relative;display:flex;flex-direction:column;min-width:0}
  .head{display:flex;align-items:flex-start;gap:3px;padding-top:2px}
  .name{display:flex;align-items:center;gap:8px;width:114px;height:18px;padding-left:5px;font:14px ${UI};color:#a0a0a0;white-space:nowrap}
  .name::before{content:"";border:5px solid transparent;border-top:6px solid #bbb;border-bottom:0}
  .alert,hgroup p,.edition,.tag,.lead{-webkit-text-stroke:1px}
  .alert{margin:1px 0 0 19px;width:660px;height:30px;background:#ff8c00;color:#1f2c34;font-weight:bold;font-size:30px;line-height:27px;padding-left:9px;white-space:nowrap}
  .titles{display:flex;justify-content:space-between;align-items:flex-start;padding-right:764px}
  hgroup{width:694px;text-align:right;margin-top:7px}
  h2{margin:0;font-size:77px;line-height:66px;font-weight:bold;color:#62b3f6;text-shadow:2px 2px #000;white-space:nowrap;-webkit-text-stroke:2px #62b3f6}
  p{margin:0}
  hgroup p{font-size:27px;line-height:26px;font-weight:bold;color:#35803b}
  news-reader{margin-top:16px}
  .foot{margin-top:auto;display:flex;flex-direction:column;gap:12px;padding-bottom:5px}
  .foot>div{display:flex;align-items:center;white-space:nowrap}
  .off{width:59px;height:37px;margin:0 12px 0 9px;padding:0;border:2px solid #666;border-radius:3px;background:#262626;color:#777;font:21px "Open Sans",sans-serif}
  .edition{font-size:30px;line-height:34px;font-weight:bold;color:#62b3f6;text-shadow:2px 2px #111}
  .tag{width:243px;height:35px;line-height:35px;text-align:center;font-size:30px;font-weight:bold;color:#fff;background:#006400}
  .dn{background:#800000;margin:0 134px 0 13px}
  .lead{font-size:29px;font-weight:bold;color:#8f7c52;width:370px}
  .quote{font:28px "Liberation Sans",sans-serif;color:#fff}
  aside{position:relative;display:flex;flex-direction:column;justify-content:space-between;align-items:center;background:#4a0f1a;padding:23px 6px 18px 12px}
  time-axis{grid-column:1/-1}
`, () => `<div class="plot">${drawChart()}
  <div class="hud">
    <div class="head"><span class="name">XAUUSD,M1</span>
      <city-clock closed style="width:233px">HONG KONG<span slot="time">22:45</span></city-clock>
      <city-clock style="width:197px;gap:16px">LONDON<span slot="time">15:45</span></city-clock>
      <city-clock style="width:223px">NEW YORK<span slot="time">10:45</span></city-clock>
      <p class="alert">Price is Below the Daily Open Line</p></div>
    <div class="titles"><hgroup><h2>XAUUSD M1</h2><p>Carlsberg Don't Do Charts</p></hgroup><news-reader></news-reader></div>
    <div class="foot">
      <div><button class="off">OFF</button><span class="edition">XU WINNER WINNER CHICKEN DINNER Edition</span></div>
      <div><span class="tag">UP SQUARE</span><span class="tag dn">DN ARROW</span><span class="lead">COMPOUND INTEREST</span><span class="quote">'He who understands it, earns it... He who does not, pays it'.</span></div>
    </div>
  </div>
  <aside><symbol-panel></symbol-panel><position-panel></position-panel></aside>
 </div>
 <price-axis></price-axis><time-axis></time-axis>`);

define('trade-terminal', `
  :host{display:grid;grid-template-rows:auto auto auto auto 1fr;height:100vh;overflow:hidden}
`, `<title-bar></title-bar><menu-bar></menu-bar><main-toolbar></main-toolbar><line-toolbar></line-toolbar><price-chart></price-chart>`);
</script>
</body>
</html>
